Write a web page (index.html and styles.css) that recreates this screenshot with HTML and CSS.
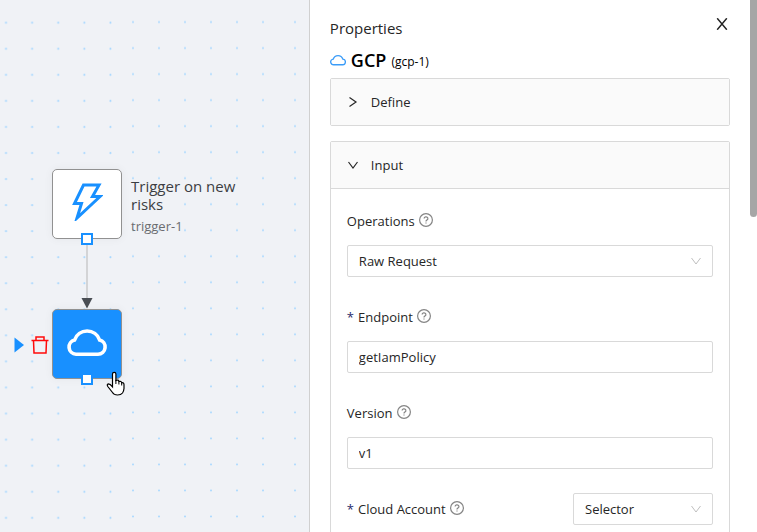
FILE: index.html
```html
<!DOCTYPE html>
<html lang="en">
<head>
    <meta charset="UTF-8">
    <meta name="viewport" content="width=device-width, initial-scale=1.0">
    <title>Playbook Editor</title>
    <link rel="stylesheet" href="styles.css">
</head>
<body>
    <!-- Flow canvas -->
    <main class="canvas">
        <svg class="grid" aria-hidden="true">
            <defs>
                <pattern id="dots" x="-7" y="10" width="26.1" height="26.06" patternUnits="userSpaceOnUse">
                    <circle cx="13" cy="12.7" r="1" fill="#a6d7ff"/>
                </pattern>
                <pattern id="dotsRight" x="120" y="10" width="26" height="26.02" patternUnits="userSpaceOnUse">
                    <circle cx="13" cy="12" r="1" fill="#a6d7ff"/>
                </pattern>
                <pattern id="dotsEdge" x="282" y="10" width="26" height="26.02" patternUnits="userSpaceOnUse">
                    <circle cx="13" cy="12" r="1" fill="#a6d7ff"/>
                </pattern>
            </defs>
            <rect width="122" height="100%" fill="url(#dots)"/>
            <rect x="122" width="154" height="100%" fill="url(#dotsRight)"/>
            <rect x="282" width="100%" height="100%" fill="url(#dotsEdge)"/>
        </svg>
        <svg class="edge" width="12" height="70" viewBox="0 0 12 70" aria-hidden="true">
            <path d="M6 0v60" stroke="#d3d4d6" stroke-width="2"/>
            <path d="M0.5 59h11L6 69.5z" fill="#4a4e54"/>
        </svg>

        <div class="node trigger">
            <svg width="32" height="38" viewBox="0 0 32 38" fill="none" stroke="#1890ff" stroke-width="3">
                <path d="M12.5 2H28L21.500 13.500H29L6 35L10.500 20.500H3.500z"/>
            </svg>
            <span class="port"></span>
        </div>
        <div class="node-label">
            <div class="node-title">Trigger on new risks</div>
            <div class="node-id">trigger-1</div>
        </div>

        <div class="node gcp">
            <svg width="42" height="30" viewBox="0 0 42 30" fill="none" stroke="#fff" stroke-width="3.6">
                <path d="M10 27.2H32a7.200 7.200 0 0 0 1.600-14.200A13.200 13.200 0 0 0 8.600 13 7.200 7.200 0 0 0 10 27.200z"/>
            </svg>
            <span class="port"></span>
        </div>

        <div class="node-tools">
            <button class="tool" aria-label="Run">
                <svg width="10" height="16" viewBox="0 0 10 16"><path d="M0.500 0.500L10 8L0.500 15.500z" fill="#1890ff"/></svg>
            </button>
            <button class="tool" aria-label="Delete">
                <svg width="18" height="18" viewBox="0 0 18 18" fill="none" stroke="#ff0a0a" stroke-width="1.5">
                    <path d="M0.500 4.500h17M5 4.500V1h8v3.500M2.500 4.500l0.500 12.500h12l0.500-12.500"/>
                </svg>
            </button>
        </div>

        <svg class="cursor" width="20" height="26" viewBox="0 0 20 26" aria-hidden="true">
            <path d="M6.500 15V3a1.700 1.700 0 0 1 3.400 0v6.500q2.800-1.200 3 1 2.500-0.800 2.800 1.300 2.300-0.600 2.300 2V17.500q-0.200 2.500-1.500 4.500-1.500 2-5 2-3.500 0-5-2.500L1.800 15.500q-1.300-2.300 0.600-2.700 1.800 0 4.100 3z" fill="#fff" stroke="#000" stroke-width="1.2"/>
            <path d="M9.900 9v4M12.900 10.500v3M15.700 12v2.500" stroke="#000"/>
        </svg>
    </main>

    <!-- Properties panel -->
    <aside class="panel">
        <header class="panel-header">
            <h1>Properties</h1>
            <button class="close" aria-label="Close">
                <svg width="12" height="12" viewBox="0 0 12 12" fill="none" stroke="#222" stroke-width="1.5"><path d="M1.200 0.300L10.800 11.700M10.800 0.300L1.200 11.700"/></svg>
            </button>
        </header>
        <h2 class="panel-title">
            <svg width="16" height="12" viewBox="0 0 42 30" fill="none" stroke="#3b9cf8" stroke-width="3.5">
                <path d="M10 27.500H32a7.500 7.500 0 0 0 1.600-15A13.200 13.200 0 0 0 8.600 12.500 7.500 7.500 0 0 0 10 27.500z"/>
            </svg>
            GCP <small>(gcp-1)</small>
        </h2>

        <section class="card">
            <button class="card-header" aria-expanded="false">
                <svg width="12" height="12" viewBox="0 0 12 12"><path d="M2.500 1.500L9 6L2.500 10.500"/></svg>
                Define
            </button>
        </section>

        <section class="card">
            <button class="card-header open" aria-expanded="true">
                <svg width="12" height="12" viewBox="0 0 12 12"><path d="M1.500 3L6 9L10.500 3"/></svg>
                Input
            </button>
            <form class="fields">
                <div class="field">
                    <div class="field-label">
                        <label for="operations">Operations</label>
                        <svg class="help" width="14" height="14" viewBox="0 0 14 14"><circle cx="7" cy="7" r="6.400"/><path d="M5.100 5.600a1.900 1.700 0 1 1 2.700 1.500q-0.800 0.400-0.800 1.300M7 9.400v1.200"/></svg>
                    </div>
                    <div class="select">
                        <select id="operations"><option>Raw Request</option></select>
                        <svg width="12" height="12" viewBox="0 0 12 12"><path d="M1.500 3L6 9L10.500 3"/></svg>
                    </div>
                </div>
                <div class="field">
                    <div class="field-label">
                        <label for="endpoint"><span class="required">*</span>Endpoint</label>
                        <svg class="help" width="14" height="14" viewBox="0 0 14 14"><circle cx="7" cy="7" r="6.400"/><path d="M5.100 5.600a1.900 1.700 0 1 1 2.700 1.500q-0.800 0.400-0.800 1.300M7 9.400v1.200"/></svg>
                    </div>
                    <input type="text" id="endpoint" value="getIamPolicy">
                </div>
                <div class="field">
                    <div class="field-label">
                        <label for="version">Version</label>
                        <svg class="help" width="14" height="14" viewBox="0 0 14 14"><circle cx="7" cy="7" r="6.400"/><path d="M5.100 5.600a1.900 1.700 0 1 1 2.700 1.500q-0.800 0.400-0.800 1.300M7 9.400v1.200"/></svg>
                    </div>
                    <input type="text" id="version" value="v1">
                </div>
                <div class="field inline">
                    <div class="field-label">
                        <label for="account"><span class="required">*</span>Cloud Account</label>
                        <svg class="help" width="14" height="14" viewBox="0 0 14 14"><circle cx="7" cy="7" r="6.400"/><path d="M5.100 5.600a1.900 1.700 0 1 1 2.700 1.500q-0.800 0.400-0.800 1.300M7 9.400v1.200"/></svg>
                    </div>
                    <div class="select">
                        <select id="account"><option>Selector</option></select>
                        <svg width="12" height="12" viewBox="0 0 12 12"><path d="M1.500 3L6 9L10.500 3"/></svg>
                    </div>
                </div>
            </form>
        </section>
        <div class="scroll-thumb"></div>
    </aside>
</body>
</html>
```

FILE: styles.css
```css
* {
    box-sizing: border-box;
}
body {
    margin: 0;
    display: flex;
    height: 100vh;
    overflow: hidden;
    font-family: "Open Sans", "Noto Sans", sans-serif;
    font-size: 13px;
    color: #262626;
}
h1, h2 {
    margin: 0;
}
button {
    padding: 0;
    border: none;
    background: none;
    font: inherit;
    color: inherit;
    cursor: pointer;
}
svg {
    display: block;
    flex: none;
}

/* Canvas */
.canvas {
    position: relative;
    flex: 1;
    background-color: #f0f2f6;
    overflow: hidden;
}
.grid {
    width: 100%;
    height: 100%;
}
.node {
    position: absolute;
    left: 52px;
    width: 70px;
    height: 70px;
    display: flex;
    align-items: center;
    justify-content: center;
    padding-bottom: 4px;
    border: 1px solid #919191;
    border-radius: 5px;
    background-color: #fff;
    box-shadow: 0 0 10px rgba(0, 0, 0, 0.05);
}
.trigger {
    top: 169px;
}
.gcp {
    top: 309px;
    background-color: #1890ff;
}
.port {
    position: absolute;
    bottom: -7px;
    left: 28px;
    width: 12px;
    height: 12px;
    border: 2px solid #1890ff;
    background-color: #fff;
}
.edge {
    position: absolute;
    left: 81px;
    top: 239px;
}
.node-label {
    position: absolute;
    left: 131px;
    top: 177px;
    width: 130px;
    color: #3c3e42;
}
.node-title {
    font-size: 15px;
    line-height: 18px;
}
.node-id {
    margin-top: 4px;
    line-height: 18px;
    color: #6a6c70;
}
.node-tools {
    position: absolute;
    left: 14px;
    top: 336px;
    display: flex;
    align-items: center;
    gap: 7px;
}
.cursor {
    position: absolute;
    left: 106px;
    top: 371px;
}

/* Properties panel */
.panel {
    position: relative;
    flex: 0 0 59.2%;
    padding: 16px 27px 0 20px;
    border-left: 1px solid #d0d0d0;
    background-color: #fff;
}
.panel-header {
    display: flex;
    align-items: center;
    justify-content: space-between;
    height: 24px;
}
.panel-header h1 {
    font-size: 15px;
    font-weight: 400;
}
.close {
    padding: 2px;
    margin-bottom: 8px;
}
.panel-title {
    display: flex;
    align-items: center;
    gap: 5px;
    height: 28px;
    margin: 6px 0 4px;
    font-size: 18px;
    font-weight: 600;
    line-height: 24px;
    color: #000;
}
.panel-title small {
    padding-top: 3px;
    font-size: 12px;
    font-weight: 400;
}
.card {
    margin-bottom: 15px;
    border: 1px solid #d9d9d9;
    border-radius: 2px;
}
.card-header {
    display: flex;
    align-items: center;
    gap: 12px;
    width: 100%;
    height: 46px;
    padding: 0 16px;
    background-color: #fafafa;
}
.card-header svg {
    fill: none;
    stroke: #262626;
    stroke-width: 1.2;
}
.card-header.open {
    height: 47px;
    border-bottom: 1px solid #d9d9d9;
}
.fields {
    display: flex;
    flex-direction: column;
    gap: 24px;
    padding: 16px;
}
.field {
    display: flex;
    flex-direction: column;
    gap: 8px;
}
.field-label {
    display: flex;
    align-items: center;
    gap: 4px;
    height: 32px;
}
.required {
    margin-right: 4px;
    color: #1f2a6b;
}
.help {
    margin-bottom: 2px;
    fill: none;
    stroke: #858585;
    stroke-width: 1.2;
}
input, select {
    width: 100%;
    height: 32px;
    padding: 0 11px;
    border: 1px solid #d9d9d9;
    border-radius: 2px;
    background-color: #fff;
    font: inherit;
    color: inherit;
    appearance: none;
}
.select {
    display: grid;
    align-items: center;
}
.select select, .select svg {
    grid-area: 1 / 1;
}
.select svg {
    justify-self: end;
    margin-right: 11px;
    fill: none;
    stroke: #bfbfbf;
    pointer-events: none;
}
.field.inline {
    flex-direction: row;
    justify-content: space-between;
}
.inline .select {
    width: 140px;
}
.scroll-thumb {
    position: absolute;
    top: 0;
    right: 0;
    width: 7px;
    height: 217px;
    border-radius: 0 0 4px 4px;
    background-color: #a6a6a6;
}
```
